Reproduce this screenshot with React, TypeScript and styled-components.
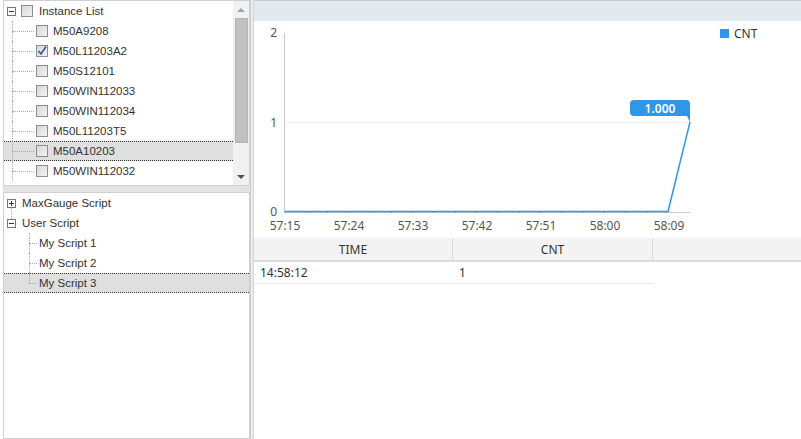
import styled, { createGlobalStyle } from "styled-components";

const GlobalStyle = createGlobalStyle`
  html, body {
    margin: 0;
    padding: 0;
    background: #ffffff;
  }
  body {
    font-family: "Liberation Sans", Arial, sans-serif;
    font-size: 12px;
    color: #333;
  }
`;

const Page = styled.div`
  width: 801px;
  height: 439px;
  display: flex;
  overflow: hidden;
`;

const LeftCol = styled.div`
  width: 247px;
  padding-left: 3px;
  display: flex;
  flex-direction: column;
`;

const Panel = styled.div<{ $height?: number }>`
  box-sizing: border-box;
  border: 1px solid #d0d0d0;
  background: #fff;
  display: flex;
  ${(p) => (p.$height ? `height: ${p.$height}px;` : "flex: 1;")}
`;

const TreeBody = styled.div`
  flex: 1;
  overflow: hidden;
  font-size: 11.5px;
  color: #333;
`;

const HSplit = styled.div`
  height: 6px;
  background: #e3e3e3;
`;

const VSplit = styled.div`
  width: 4px;
  box-sizing: border-box;
  border-left: 1px solid #cfcfcf;
  border-right: 1px solid #d6d6d6;
  background: #ececec;
`;

const Scrollbar = styled.div`
  width: 16px;
  background: #f1f1f1;
  display: flex;
  flex-direction: column;
  align-items: center;
`;

const Arrow = styled.div<{ $down?: boolean }>`
  height: 17px;
  display: flex;
  align-items: center;
  justify-content: center;
  &::before {
    content: "";
    border-left: 4px solid transparent;
    border-right: 4px solid transparent;
    ${(p) =>
      p.$down
        ? "border-top: 4px solid #505050;"
        : "border-bottom: 4px solid #a3a3a3;"}
  }
`;

const Thumb = styled.div`
  width: 13px;
  height: 125px;
  box-sizing: border-box;
  background: #c1c1c1;
  border: 1px solid #b4b4b4;
`;

const Track = styled.div`
  flex: 1;
`;

const Row = styled.div<{ $selected?: boolean }>`
  height: 20px;
  box-sizing: border-box;
  display: flex;
  align-items: center;
  white-space: nowrap;
  background: ${(p) => (p.$selected ? "#dfdfdf" : "transparent")};
  border-top: 1px dotted ${(p) => (p.$selected ? "#333" : "transparent")};
  border-bottom: 1px dotted ${(p) => (p.$selected ? "#333" : "transparent")};
`;

const Elbow = styled.span<{ $left: number; $width: number; $last?: boolean }>`
  position: relative;
  align-self: stretch;
  margin: -1px 0;
  margin-left: ${(p) => p.$left}px;
  width: ${(p) => p.$width}px;
  flex-shrink: 0;
  &::before {
    content: "";
    position: absolute;
    left: 0;
    top: 0;
    height: ${(p) => (p.$last ? "50%" : "100%")};
    border-left: 1px dotted #a8a8a8;
  }
  &::after {
    content: "";
    position: absolute;
    left: 0;
    top: 50%;
    width: 100%;
    border-top: 1px dotted #a8a8a8;
  }
`;

const Expander = styled.span<{ $left: number; $lineBelow?: boolean }>`
  position: relative;
  width: 9px;
  height: 9px;
  box-sizing: border-box;
  margin-left: ${(p) => p.$left}px;
  border: 1px solid #5b7ba6;
  background: #fff;
  flex-shrink: 0;
  display: flex;
  align-items: center;
  justify-content: center;
  &::after {
    content: "";
    display: ${(p) => (p.$lineBelow ? "block" : "none")};
    position: absolute;
    left: 3px;
    top: 8px;
    height: 13px;
    border-left: 1px dotted #a8a8a8;
  }
`;

const Checkbox = styled.span<{ $gap: number }>`
  width: 12px;
  height: 12px;
  box-sizing: border-box;
  margin-left: ${(p) => p.$gap}px;
  border: 1px solid #8e8e8e;
  background: linear-gradient(135deg, #d8d8d8, #f2f2f2);
  flex-shrink: 0;
  display: flex;
  align-items: center;
  justify-content: center;
`;

const Label = styled.span<{ $gap: number }>`
  margin-left: ${(p) => p.$gap}px;
`;

const RightCol = styled.div`
  flex: 1;
  display: flex;
  flex-direction: column;
`;

const TopBar = styled.div`
  height: 21px;
  box-sizing: border-box;
  border-top: 1px solid #c9c9c9;
  background: #e2e9f1;
`;

const ChartBox = styled.div`
  height: 217px;
`;

const Grid = styled.div`
  font-family: "Noto Sans", "Open Sans", sans-serif;
  font-size: 12px;
  color: #333;
`;

const GridHead = styled.div`
  display: grid;
  grid-template-columns: 199px 200px 1fr;
  height: 24px;
  box-sizing: border-box;
  background: #f3f3f3;
  border-bottom: 2px solid #dcdcdc;
`;

const HeadCell = styled.div`
  display: flex;
  align-items: center;
  justify-content: center;
  border-right: 1px solid #dadada;
`;

const GridRow = styled.div`
  display: grid;
  grid-template-columns: 199px 200px;
  width: 399px;
  height: 22px;
  box-sizing: border-box;
  border-bottom: 1px solid #ececec;
`;

const Cell = styled.div`
  display: flex;
  align-items: center;
  padding-left: 6px;
`;

const MinusIcon = () => (
  <svg width="7" height="7" viewBox="0 0 7 7">
    <rect x="1" y="3" width="5" height="1" fill="#333" />
  </svg>
);

const PlusIcon = () => (
  <svg width="7" height="7" viewBox="0 0 7 7">
    <rect x="1" y="3" width="5" height="1" fill="#333" />
    <rect x="3" y="1" width="1" height="5" fill="#333" />
  </svg>
);

const CheckIcon = () => (
  <svg width="10" height="10" viewBox="0 0 10 10">
    <path d="M1.5 5 L4 8 L9 0.5" fill="none" stroke="#2f55a4" strokeWidth="1.6" />
  </svg>
);

const instances = [
  { name: "M50A9208" },
  { name: "M50L11203A2", checked: true },
  { name: "M50S12101" },
  { name: "M50WIN112033" },
  { name: "M50WIN112034" },
  { name: "M50L11203T5" },
  { name: "M50A10203", selected: true },
  { name: "M50WIN112032" },
];

const scripts = ["My Script 1", "My Script 2", "My Script 3"];

const xLabels = ["57:15", "57:24", "57:33", "57:42", "57:51", "58:00", "58:09"];

const Chart = () => {
  const blue = "#2f96e8";
  const ticks = Array.from({ length: 20 }, (_, i) => 31 + i * 21.3);
  return (
    <svg width="547" height="217" style={{ display: "block" }}>
      <line x1="31" y1="101.5" x2="436" y2="101.5" stroke="#efefef" />
      <line x1="30.5" y1="12" x2="30.5" y2="191" stroke="#c8c8c8" />
      <line x1="31" y1="191.5" x2="436" y2="191.5" stroke="#cccccc" />
      <g fontFamily="Noto Sans, Open Sans, sans-serif" fontSize="12" fill="#555">
        <text x="23" y="16" textAnchor="end">2</text>
        <text x="23" y="106" textAnchor="end">1</text>
        <text x="23" y="195" textAnchor="end">0</text>
        {xLabels.map((l, i) => (
          <text key={l} x={31 + i * 64} y="209" textAnchor="middle">
            {l}
          </text>
        ))}
      </g>
      <polyline
        points="31,190.5 414,190.5 436,101"
        fill="none"
        stroke={blue}
        strokeWidth="1.5"
      />
      {ticks.filter((t) => t < 414).map((t) => (
        <line key={t} x1={t} y1="190" x2={t} y2="192" stroke="#5b8fc4" />
      ))}
      <path
        d="M380 79 H432 Q436 79 436 83 V101 L433 95 H380 Q376 95 376 91 V83 Q376 79 380 79 Z"
        fill={blue}
      />
      <text
        x="406"
        y="91.5"
        textAnchor="middle"
        fontFamily="Noto Sans, Open Sans, sans-serif"
        fontSize="12"
        fontWeight="600"
        fill="#fff"
      >
        1.000
      </text>
      <rect x="466" y="8" width="9" height="9" fill={blue} />
      <text x="480" y="17" fontFamily="Noto Sans, Open Sans, sans-serif" fontSize="12" fill="#333">
        CNT
      </text>
    </svg>
  );
};

export default function App() {
  return (
    <Page>
      <GlobalStyle />
      <LeftCol>
        <Panel $height={186}>
          <TreeBody>
            <Row>
              <Expander $left={3}>
                <MinusIcon />
              </Expander>
              <Checkbox $gap={5} />
              <Label $gap={6}>Instance List</Label>
            </Row>
            {instances.map((it) => (
              <Row key={it.name} $selected={it.selected}>
                <Elbow $left={8} $width={22} />
                <Checkbox $gap={2}>{it.checked && <CheckIcon />}</Checkbox>
                <Label $gap={5}>{it.name}</Label>
              </Row>
            ))}
          </TreeBody>
          <Scrollbar>
            <Arrow />
            <Thumb />
            <Track />
            <Arrow $down />
          </Scrollbar>
        </Panel>
        <HSplit />
        <Panel>
          <TreeBody>
            <Row>
              <Expander $left={3} $lineBelow>
                <PlusIcon />
              </Expander>
              <Label $gap={6}>MaxGauge Script</Label>
            </Row>
            <Row>
              <Expander $left={3}>
                <MinusIcon />
              </Expander>
              <Label $gap={6}>User Script</Label>
            </Row>
            {scripts.map((s, i) => (
              <Row key={s} $selected={i === scripts.length - 1}>
                <Elbow $left={25} $width={8} $last={i === scripts.length - 1} />
                <Label $gap={2}>{s}</Label>
              </Row>
            ))}
          </TreeBody>
        </Panel>
      </LeftCol>
      <VSplit />
      <RightCol>
        <TopBar />
        <ChartBox>
          <Chart />
        </ChartBox>
        <Grid>
          <GridHead>
            <HeadCell>TIME</HeadCell>
            <HeadCell>CNT</HeadCell>
            <div />
          </GridHead>
          <GridRow>
            <Cell>14:58:12</Cell>
            <Cell>1</Cell>
          </GridRow>
        </Grid>
      </RightCol>
    </Page>
  );
}
